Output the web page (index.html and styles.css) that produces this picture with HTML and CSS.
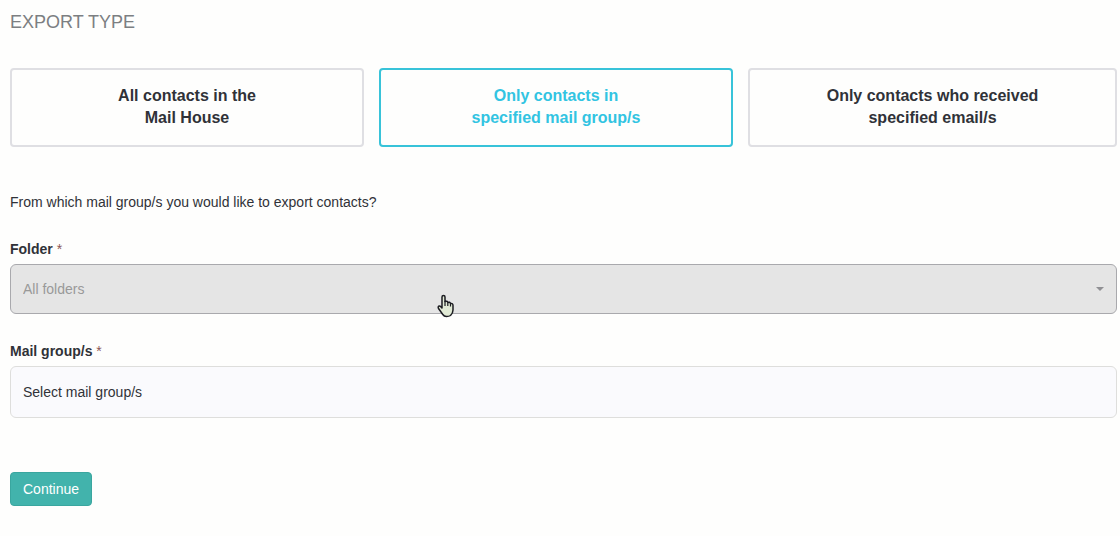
FILE: index.html
```html
<!DOCTYPE html>
<html lang="en">
<head>
    <meta charset="UTF-8">
    <meta name="viewport" content="width=device-width, initial-scale=1.0">
    <title>Export contacts</title>
    <link rel="stylesheet" href="styles.css">
</head>
<body>
    <form class="export-form">
        <h2>EXPORT TYPE</h2>
        <div class="export-types">
            <button type="button" class="type-card">All contacts in the<br>Mail House</button>
            <button type="button" class="type-card active">Only contacts in<br>specified mail group/s</button>
            <button type="button" class="type-card">Only contacts who received<br>specified email/s</button>
        </div>

        <p class="question">From which mail group/s you would like to export contacts?</p>

        <div class="field">
            <label for="folder">Folder <span class="required">*</span></label>
            <div class="select-wrap">
                <select id="folder">
                    <option>All folders</option>
                </select>
                <span class="caret"></span>
                <svg class="pointer" width="18" height="24" viewBox="0 0 18 24" aria-hidden="true">
                    <path d="M5 14V3Q5 1.500 6.500 1.500T8 3V7.500Q10.500 6.500 10.800 8.500Q13 7.500 13.500 9.500Q16 9 16 11.500V16Q16 19 13.500 21.500Q12 22.500 9.500 22.500Q7 22.500 5.800 20.500L1.500 14.500Q.6 12.500 2.200 12Q3.500 11.800 5 14Z" fill="#e1ead5" stroke="#1c1d22" stroke-width="1.500" stroke-linejoin="round"/>
                    <path d="M8 7V12M10.800 8.500V12M13.500 9.500V12.500" fill="none" stroke="#1c1d22" stroke-width="1.200"/>
                </svg>
            </div>
        </div>

        <div class="field">
            <label for="mailGroups">Mail group/s <span class="required">*</span></label>
            <input type="text" id="mailGroups" placeholder="Select mail group/s">
        </div>

        <button type="submit" class="continue-btn">Continue</button>
    </form>
</body>
</html>
```
FILE: styles.css
```css
* {
    margin: 0;
    padding: 0;
    box-sizing: border-box;
    font-family: "Liberation Sans", Arial, sans-serif;
}

body {
    background: #fefefd;
    color: #303238;
    font-size: 14px;
    line-height: 20px;
}

.export-form {
    padding: 12px 3px 30px 10px;
}

h2 {
    color: #7c7f82;
    font-size: 18px;
    font-weight: normal;
    line-height: 20px;
    margin-bottom: 36px;
}

/* Export type cards */
.export-types {
    display: grid;
    grid-template-columns: repeat(3, 1fr);
    margin-bottom: 45px;
}

.type-card {
    padding: 15px 10px 16px;
    border: 2px solid #dfdfe3;
    border-radius: 4px;
    background: transparent;
    color: #303238;
    font-size: 16px;
    font-weight: bold;
    line-height: 22px;
    cursor: pointer;
}

.type-card:not(:last-child) {
    margin-right: 15px;
}

.type-card.active {
    border-color: #38c3d9;
    color: #32c4e2;
}

.question {
    margin-bottom: 27px;
}

/* Form fields */
.field {
    margin-bottom: 27px;
}

label {
    display: block;
    margin-bottom: 5px;
    font-weight: bold;
}

.required {
    color: #8c5656;
    font-weight: normal;
}

.select-wrap {
    position: relative;
}

select,
input {
    display: block;
    width: 100%;
    padding: 0 12px;
    border-radius: 6px;
    font-size: 14px;
    outline: none;
}

select {
    height: 50px;
    border: 1px solid #a9a9ad;
    background: #e5e5e5;
    color: #999;
    appearance: none;
    cursor: pointer;
}

input {
    height: 52px;
    border: 1px solid #dededc;
    background: #fafafd;
    color: #303238;
}

input::placeholder {
    color: #303238;
    opacity: 1;
}

.caret {
    position: absolute;
    top: 23px;
    right: 13px;
    border-top: 4px solid #909094;
    border-left: 4px solid transparent;
    border-right: 4px solid transparent;
    pointer-events: none;
}

.pointer {
    position: absolute;
    top: 30px;
    left: 427px;
    pointer-events: none;
}

.continue-btn {
    margin-top: 27px;
    padding: 6px 12px;
    border: 1px solid #3aa69f;
    border-radius: 4px;
    background: #42b3ac;
    color: white;
    font-size: 14px;
    line-height: 20px;
    cursor: pointer;
}
```
